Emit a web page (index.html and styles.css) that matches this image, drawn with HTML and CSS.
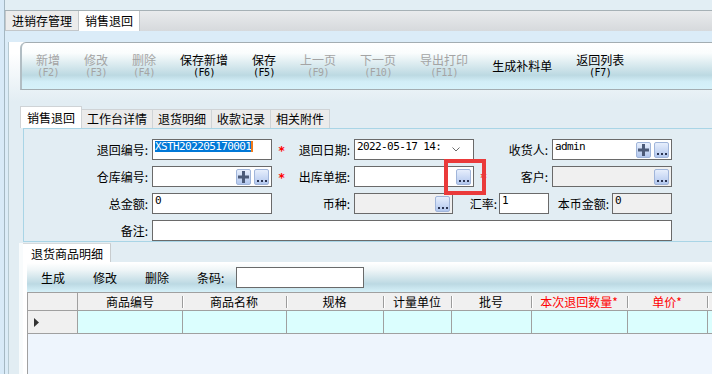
FILE: index.html
```html
<!DOCTYPE html>
<html lang="zh-CN">

<head>
    <meta charset="UTF-8">
    <meta name="viewport" content="width=device-width, initial-scale=1.0">
    <title>销售退回</title>
    <link rel="stylesheet" href="styles.css">
</head>

<body>
    <div class="app">
        <div class="side"></div>
        <div class="main">
            <div class="top-tabs">
                <div class="tab-strip">
                    <div class="top-tab">进销存管理</div>
                    <div class="top-tab active">销售退回</div>
                </div>
            </div>

            <div class="page">
                <div class="frame">
                    <div class="toolbar">
                        <div class="tool off">新增<span>(F2)</span></div>
                        <div class="tool off">修改<span>(F3)</span></div>
                        <div class="tool off">删除<span>(F4)</span></div>
                        <div class="tool">保存新增<span>(F6)</span></div>
                        <div class="tool">保存<span>(F5)</span></div>
                        <div class="tool off">上一页<span>(F9)</span></div>
                        <div class="tool off">下一页<span>(F10)</span></div>
                        <div class="tool off">导出打印<span>(F11)</span></div>
                        <div class="tool">生成补料单</div>
                        <div class="tool">返回列表<span>(F7)</span></div>
                    </div>

                    <div class="form-tabs">
                        <div class="form-tab active">销售退回</div>
                        <div class="form-tab">工作台详情</div>
                        <div class="form-tab">退货明细</div>
                        <div class="form-tab">收款记录</div>
                        <div class="form-tab">相关附件</div>
                    </div>

                    <div class="form-panel">
                        <div class="row">
                            <div class="lbl l1">退回编号:</div>
                            <div class="field w120"><div class="val"><span class="sel">XSTH202205170001</span><span class="caret"></span></div></div>
                            <div class="req">*</div>
                            <div class="lbl l2">退回日期:</div>
                            <div class="field w120">
                                <div class="val">2022-05-17 14:</div>
                                <svg class="chev" width="8" height="5" viewBox="0 0 8 5"><polyline points="0.5,0.5 4,4 7.5,0.5" fill="none" stroke="#6b6b6b" stroke-width="1"/></svg>
                            </div>
                            <div class="lbl l3">收货人:</div>
                            <div class="field w120">
                                <div class="val">admin</div>
                                <div class="btn"><svg width="11" height="12" viewBox="0 0 11 12"><rect x="0" y="4.5" width="11" height="3" fill="#4b5a78"/><rect x="4" y="0" width="3" height="12" fill="#4b5a78"/></svg></div>
                                <div class="btn"><svg width="10" height="12" viewBox="0 0 10 12"><rect x="0" y="9" width="2" height="2" fill="#2b3552"/><rect x="4" y="9" width="2" height="2" fill="#2b3552"/><rect x="8" y="9" width="2" height="2" fill="#2b3552"/></svg></div>
                            </div>
                        </div>

                        <div class="row">
                            <div class="lbl l1">仓库编号:</div>
                            <div class="field w120">
                                <div class="val"></div>
                                <div class="btn"><svg width="11" height="12" viewBox="0 0 11 12"><rect x="0" y="4.5" width="11" height="3" fill="#4b5a78"/><rect x="4" y="0" width="3" height="12" fill="#4b5a78"/></svg></div>
                                <div class="btn"><svg width="10" height="12" viewBox="0 0 10 12"><rect x="0" y="9" width="2" height="2" fill="#2b3552"/><rect x="4" y="9" width="2" height="2" fill="#2b3552"/><rect x="8" y="9" width="2" height="2" fill="#2b3552"/></svg></div>
                            </div>
                            <div class="req">*</div>
                            <div class="lbl l2">出库单据:</div>
                            <div class="field w120 marked">
                                <div class="val"></div>
                                <div class="btn"><svg width="10" height="12" viewBox="0 0 10 12"><rect x="0" y="9" width="2" height="2" fill="#2b3552"/><rect x="4" y="9" width="2" height="2" fill="#2b3552"/><rect x="8" y="9" width="2" height="2" fill="#2b3552"/></svg></div>
                                <div class="highlight"></div>
                            </div>
                            <div class="req">*</div>
                            <div class="lbl l3s">客户:</div>
                            <div class="field w120 gray">
                                <div class="val"></div>
                                <div class="btn"><svg width="10" height="12" viewBox="0 0 10 12"><rect x="0" y="9" width="2" height="2" fill="#2b3552"/><rect x="4" y="9" width="2" height="2" fill="#2b3552"/><rect x="8" y="9" width="2" height="2" fill="#2b3552"/></svg></div>
                            </div>
                        </div>

                        <div class="row">
                            <div class="lbl l1">总金额:</div>
                            <div class="field w120"><div class="val">0</div></div>
                            <div class="gap"></div>
                            <div class="lbl l2">币种:</div>
                            <div class="field w99 gray">
                                <div class="val"></div>
                                <div class="btn"><svg width="10" height="12" viewBox="0 0 10 12"><rect x="0" y="9" width="2" height="2" fill="#2b3552"/><rect x="4" y="9" width="2" height="2" fill="#2b3552"/><rect x="8" y="9" width="2" height="2" fill="#2b3552"/></svg></div>
                            </div>
                            <div class="lbl l-rate">汇率:</div>
                            <div class="field w50"><div class="val">1</div></div>
                            <div class="lbl l-local">本币金额:</div>
                            <div class="field w60 gray"><div class="val">0</div></div>
                        </div>

                        <div class="row last">
                            <div class="lbl l1">备注:</div>
                            <div class="field w520"><div class="val"></div></div>
                        </div>
                    </div>

                    <div class="detail">
                        <div class="detail-tabs">
                            <div class="detail-tab">退货商品明细</div>
                        </div>
                        <div class="detail-body">
                            <div class="grid-bar">
                                <div class="gbtn">生成</div>
                                <div class="gbtn">修改</div>
                                <div class="gbtn">删除</div>
                                <div class="glbl">条码:</div>
                                <div class="code"></div>
                            </div>
                            <div class="grid">
                                <div class="grid-head">
                                    <div class="hc corner"></div>
                                    <div class="hc first">商品编号</div>
                                    <div class="hc">商品名称</div>
                                    <div class="hc">规格</div>
                                    <div class="hc">计量单位</div>
                                    <div class="hc">批号</div>
                                    <div class="hc red">本次退回数量*</div>
                                    <div class="hc red">单价*</div>
                                    <div class="hc"></div>
                                </div>
                                <div class="grid-row">
                                    <div class="dc rowhead"><svg width="5" height="9" viewBox="0 0 5 9"><polygon points="0,0 5,4.5 0,9" fill="#333"/></svg></div>
                                    <div class="dc"></div>
                                    <div class="dc"></div>
                                    <div class="dc"></div>
                                    <div class="dc"></div>
                                    <div class="dc"></div>
                                    <div class="dc"></div>
                                    <div class="dc"></div>
                                    <div class="dc"></div>
                                </div>
                            </div>
                        </div>
                    </div>
                </div>
            </div>
        </div>
    </div>
</body>

</html>
```

FILE: styles.css
```css
* {
    box-sizing: border-box;
}
body {
    margin: 0;
    width: 712px;
    height: 374px;
    overflow: hidden;
    background-color: #e2edf3;
    font-family: "Noto Sans CJK SC", sans-serif;
    font-size: 12px;
    color: #000;
}
.app {
    display: flex;
    height: 374px;
}
.side {
    width: 5px;
    background: #d8eaf8;
    border-right: 1px solid #a4b7c2;
}
.main {
    flex: 1;
    display: flex;
    flex-direction: column;
}

/* top document tabs */
.top-tabs {
    padding-top: 10px;
    background: #e2eef4;
}
.tab-strip {
    display: flex;
    height: 21px;
    border-top: 1px solid #a6b1b6;
    background: linear-gradient(#e9ebed, #d6d9dc);
}
.top-tab {
    height: 20px;
    padding: 0 6px;
    line-height: 19px;
    font-size: 12px;
    background: #ececec;
    border-left: 1px solid #c3c7ca;
    border-right: 1px solid #c3c7ca;
    border-bottom: 1px solid #c3c7ca;
}
.top-tab.active {
    background: #fff;
    border-left: none;
    border-bottom: none;
}

.page {
    height: 343px;
    padding-left: 3px;
    background: #dbecf8;
}
.frame {
    height: 343px;
    border-left: 1px solid #b6c9d2;
    background: linear-gradient(#fff 0, #fff 11px, #e2edf3 60px);
}

/* main toolbar */
.toolbar {
    display: flex;
    align-items: center;
    height: 48px;
    margin: 11px 0 0 11px;
    padding-left: 2px;
    border-top: 1px solid #a3adb2;
    border-bottom: 1px solid #a3adb2;
    border-left: 2px solid #b1bdc3;
    border-top-left-radius: 6px;
    background: linear-gradient(#fff 0%, #fafdfd 22%, #bcd9e2 70%, #d2eef7 84%, #d6f2fa 100%);
}
.tool {
    display: flex;
    flex-direction: column;
    align-items: center;
    padding: 0 12px;
    line-height: 12px;
    white-space: nowrap;
}
.tool span {
    margin-top: 1px;
    font-family: "DejaVu Sans Mono", monospace;
    font-size: 10px;
    letter-spacing: -0.5px;
    line-height: 11px;
}
.tool.off {
    color: #a4a4a4;
}

/* form tabs */
.form-tabs {
    display: flex;
    align-items: flex-end;
    height: 22px;
    margin: 16px 0 0 11px;
}
.form-tab {
    height: 19px;
    padding: 0 5px;
    margin-left: -1px;
    line-height: 18px;
    background: #ebebeb;
    border: 1px solid #cfd3d6;
    border-bottom: none;
}
.form-tab.active {
    height: 22px;
    margin-left: 0;
    padding: 0 6px;
    line-height: 21px;
    background: #fff;
}

.form-panel {
    margin-left: 14px;
    padding-top: 10px;
    border-top: 1px solid #a9d5e6;
    border-left: 1px solid #a9d5e6;
    border-bottom: 1px solid #a9d5e6;
}
.row {
    display: flex;
    align-items: center;
    height: 21px;
    margin-bottom: 6px;
}
.row.last {
    margin-bottom: 0;
}
.lbl {
    flex: none;
    text-align: right;
    padding-right: 4px;
    white-space: nowrap;
}
.l1 { width: 128px; }
.l2 { width: 58px; }
.l3 { width: 78px; }
.l3s { width: 54px; }
.l-rate { width: 46px; padding-right: 2px; }
.l-local { width: 63px; padding-right: 3px; }
.gap { width: 24px; }
.req {
    flex: none;
    width: 24px;
    padding: 3px 0 0 6px;
    color: #ff0000;
    font-family: "DejaVu Sans Mono", monospace;
    font-size: 12px;
    font-weight: bold;
}

.field {
    flex: none;
    display: flex;
    align-items: center;
    height: 21px;
    padding: 0 2px 0 2px;
    border: 1px solid #6a6a6a;
    background: #fff;
}
.field.gray {
    background: #f0f0f0;
}
.w120 { width: 120px; }
.w99 { width: 99px; }
.w50 { width: 50px; }
.w60 { width: 60px; }
.w520 { width: 520px; }
.val {
    flex: 1;
    align-self: flex-start;
    overflow: hidden;
    white-space: nowrap;
    font-family: "DejaVu Sans Mono", monospace;
    font-size: 11px;
    letter-spacing: -0.6px;
    line-height: 14px;
}
.sel {
    display: inline-block;
    height: 11px;
    margin-top: 1px;
    line-height: 11px;
    vertical-align: top;
    color: #fff;
    background: #0078d7;
}
.caret {
    display: inline-block;
    width: 2px;
    height: 11px;
    margin-top: 1px;
    vertical-align: top;
    background: #f07a1a;
}
.chev {
    margin-right: 11px;
}
.btn {
    flex: none;
    display: flex;
    align-items: center;
    justify-content: center;
    width: 15px;
    height: 16px;
    margin-left: 3px;
    border: 1px solid #a0b5da;
    border-radius: 2px;
    background: linear-gradient(#e6eefc, #b2c7ee);
}
.marked {
    position: relative;
}
.highlight {
    position: absolute;
    left: 89px;
    top: -8px;
    width: 42px;
    height: 36px;
    border: 4px solid #ea3a3a;
}

/* detail grid */
.detail {
    margin: 1px 0 0 10px;
    border-left: 4px solid #f8fbfc;
}
.detail-tabs {
    display: flex;
    height: 19px;
}
.detail-tab {
    padding: 0 7px 0 8px;
    line-height: 19px;
    background: #fff;
    border-top: 1px solid #d6dadc;
    border-right: 1px solid #c8ccce;
}
.detail-body {
    height: 112px;
    padding: 1px 0 0 4px;
    background: #fff;
}
.grid-bar {
    display: flex;
    align-items: center;
    height: 29px;
    background: linear-gradient(#fff 0%, #eef5f7 25%, #bcd9e3 72%, #d6f1f9 100%);
}
.gbtn {
    padding: 0 14px;
}
.glbl {
    padding-left: 14px;
}
.code {
    width: 128px;
    height: 21px;
    margin-left: 12px;
    border: 1px solid #6a6a6a;
    background: #fff;
}
.grid {
    height: 82px;
    border-top: 1px solid #a0a0a0;
    border-left: 1px solid #a0a0a0;
    background: #eef5fd;
}
.grid-head,
.grid-row {
    display: grid;
    grid-template-columns: 49px 105px 104px 97px 68px 80px 96px 80px 1fr;
}
.grid-head {
    height: 18px;
    border-bottom: 1px solid #a0a0a0;
    background: #f0f0f0;
}
.hc {
    text-align: center;
    line-height: 17px;
    white-space: nowrap;
    background:
        linear-gradient(#9c9c9c, #9c9c9c) 0 3px / 1px 12px no-repeat,
        linear-gradient(#fff, #fff) 1px 3px / 1px 12px no-repeat,
        #f0f0f0;
}
.hc.corner {
    background: #f0f0f0;
}
.hc.first {
    border-left: 1px solid #a0a0a0;
    background: #f0f0f0;
}
.hc.red {
    color: #ff0000;
}
.grid-row {
    height: 23px;
    border-bottom: 1px solid #a0a0a0;
}
.dc {
    border-left: 1px solid #a0a0a0;
    background: #dbfefe;
}
.dc.rowhead {
    display: flex;
    align-items: center;
    padding-left: 6px;
    border-left: none;
    background: #f0f0f0;
}
```
